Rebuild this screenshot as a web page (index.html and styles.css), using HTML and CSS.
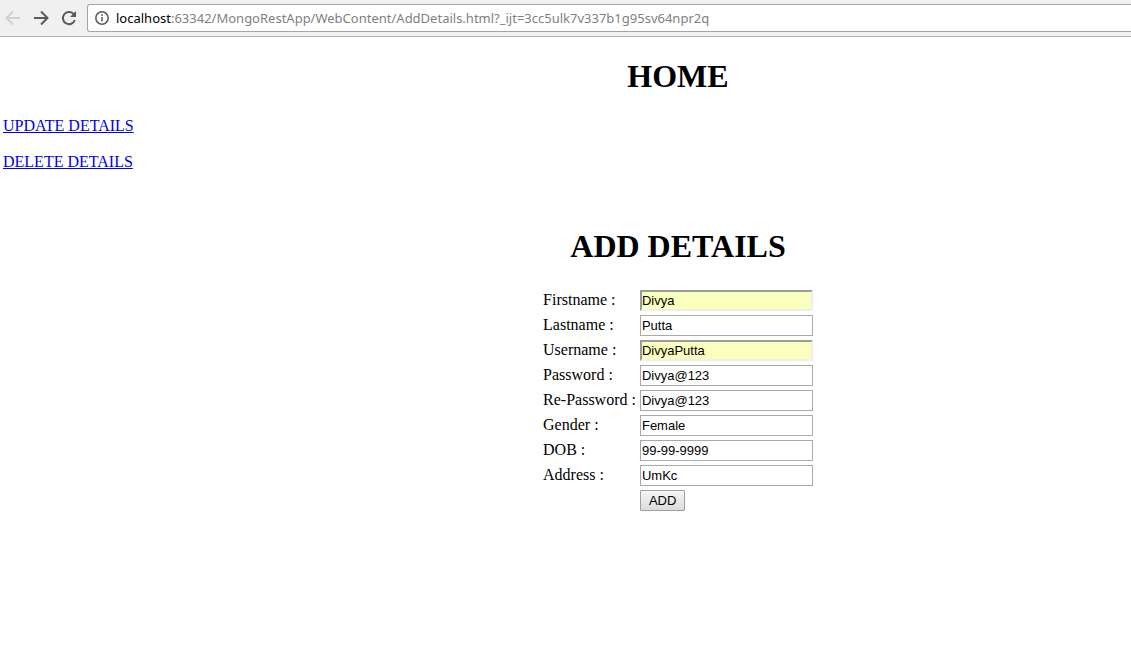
FILE: index.html
```html
<!DOCTYPE html>
<html lang="en">
<head>
<meta charset="utf-8">
<title>Add Details</title>
<link rel="stylesheet" href="styles.css">
</head>
<body>
<header class="toolbar">
  <button class="tool back" type="button" aria-label="Back" disabled>
    <svg width="16" height="16" viewBox="0 0 16 16"><path d="M15 8H2M8 1.5L1.5 8L8 14.5"/></svg>
  </button>
  <button class="tool" type="button" aria-label="Forward">
    <svg width="16" height="16" viewBox="0 0 16 16"><path d="M1 8H14M8 1.5L14.500 8L8 14.5"/></svg>
  </button>
  <button class="tool" type="button" aria-label="Reload">
    <svg width="16" height="16" viewBox="0 0 16 16"><path d="M13.800 10A6.100 6.100 0 1 1 12.300 3.700L13.500 5"/><path class="solid" d="M15 1V7H9Z"/></svg>
  </button>
  <div class="address">
    <svg class="info" width="14" height="14" viewBox="0 0 14 14"><circle cx="7" cy="7" r="6.200"/><path d="M7 6V10.500M7 3.300V4.900"/></svg>
    <span class="url"><span class="host">localhost</span>:63342/MongoRestApp/WebContent/AddDetails.html?_ijt=3cc5ulk7v337b1g95sv64npr2q</span>
  </div>
</header>
<main class="page">
  <h1 class="title">HOME</h1>
  <nav class="links">
    <a href="#update">UPDATE DETAILS</a>
    <a href="#delete">DELETE DETAILS</a>
  </nav>
  <h1 class="title">ADD DETAILS</h1>
  <form class="details">
    <table class="fields">
      <tr><td><label for="first">Firstname :</label></td><td><input class="field autofilled" id="first" type="text" value="Divya"></td></tr>
      <tr><td><label for="last">Lastname :</label></td><td><input class="field" id="last" type="text" value="Putta"></td></tr>
      <tr><td><label for="user">Username :</label></td><td><input class="field autofilled" id="user" type="text" value="DivyaPutta"></td></tr>
      <tr><td><label for="pass">Password :</label></td><td><input class="field" id="pass" type="text" value="Divya@123"></td></tr>
      <tr><td><label for="repass">Re-Password :</label></td><td><input class="field" id="repass" type="text" value="Divya@123"></td></tr>
      <tr><td><label for="gender">Gender :</label></td><td><input class="field" id="gender" type="text" value="Female"></td></tr>
      <tr><td><label for="dob">DOB :</label></td><td><input class="field" id="dob" type="text" value="99-99-9999"></td></tr>
      <tr><td><label for="address">Address :</label></td><td><input class="field" id="address" type="text" value="UmKc"></td></tr>
      <tr><td></td><td><button class="add" type="button">ADD</button></td></tr>
    </table>
  </form>
</main>
</body>
</html>
```
FILE: styles.css
```css
* { box-sizing: border-box; }
body {
  margin: 0;
  background: #fff;
  color: #000;
  font: 16px/18px "Liberation Serif", "Times New Roman", serif;
}
.toolbar {
  display: flex;
  align-items: flex-start;
  gap: 12px;
  padding: 4px 0 4px 5px;
  background: #f0f0f0;
  border-bottom: 1px solid #b2b2b2;
}
.tool {
  display: flex;
  padding: 6px 0;
  border: 0;
  background: none;
}
.tool svg {
  fill: none;
  stroke: #5a5a5a;
  stroke-width: 2;
}
.tool .solid { fill: #5a5a5a; stroke: none; }
.back svg { stroke: #d0d0d0; }
.address {
  display: flex;
  flex: 1;
  align-items: center;
  gap: 7px;
  min-width: 0;
  height: 28px;
  margin-left: -2px;
  padding-left: 7px;
  border: 1px solid #a5a5a5;
  border-right: 0;
  border-radius: 3px 0 0 3px;
  background: #fff;
}
.info {
  flex: none;
  fill: none;
  stroke: #5a5a5a;
  stroke-width: 1.500;
}
.url {
  overflow: hidden;
  color: #808080;
  font: 13px/20px "Noto Sans", "Open Sans", sans-serif;
  white-space: nowrap;
}
.host { color: #000; }
.page { padding: 21px 0; }
.title {
  margin: 0 0 22px 225px;
  font-size: 32px;
  line-height: 37px;
  text-align: center;
}
.links {
  display: flex;
  flex-direction: column;
  align-items: flex-start;
  gap: 18px;
  margin-bottom: 57px;
  padding-left: 3px;
}
.links a { color: #00e; }
.details {
  display: flex;
  justify-content: center;
  margin-left: 225px;
}
.fields { border-spacing: 2px; }
.fields td { padding: 1px; line-height: 20px; vertical-align: top; }
.field {
  display: block;
  width: 173px;
  height: 21px;
  padding: 1px;
  border: 1px solid #a9a9a9;
  background: #fff;
  color: #000;
  font: 13px "Liberation Sans", Arial, sans-serif;
}
.autofilled {
  padding: 0;
  border: 2px solid;
  border-color: #9a9a9a #eee #eee #9a9a9a;
  background: #faffbd;
}
.add {
  display: block;
  height: 21px;
  padding: 0 8px;
  border: 1px solid #a0a0a0;
  border-radius: 1px;
  background: linear-gradient(#f5f5f5, #dcdcdc);
  color: #000;
  font: 13px "Liberation Sans", Arial, sans-serif;
}
```
